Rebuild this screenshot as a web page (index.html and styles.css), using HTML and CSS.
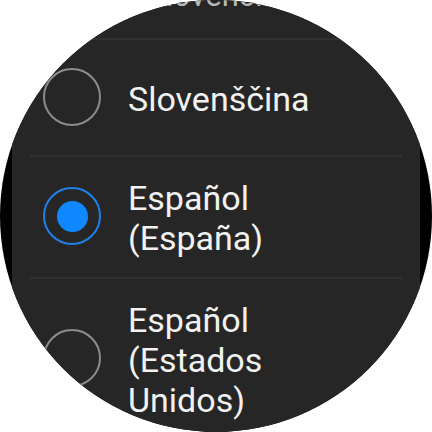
FILE: index.html
```html
<!DOCTYPE html>
<html lang="sk">
<head>
<meta charset="utf-8">
<link rel="stylesheet" href="styles.css">
</head>
<body>
<div class="watch">
  <div class="list">
    <div class="row-top"><span class="label-top">Slovenčina</span></div>
    <div class="row">
      <span class="radio"></span>
      <span class="label">Slovenščina</span>
    </div>
    <div class="row">
      <span class="radio radio-on"><span class="dot"></span></span>
      <span class="label">Español<br>(España)</span>
    </div>
    <div class="row">
      <span class="radio"></span>
      <span class="label">Español<br>(Estados<br>Unidos)</span>
    </div>
  </div>
</div>
</body>
</html>
```

FILE: styles.css
```css
html, body {
  margin: 0;
  padding: 0;
  background: #ffffff;
}

.watch {
  width: 432px;
  height: 432px;
  border-radius: 50%;
  overflow: hidden;
  background: #000000;
  font-family: Roboto, "Noto Sans", sans-serif;
}

.list {
  margin: 0 12px;
  height: 100%;
  background: #262626;
  display: flex;
  flex-direction: column;
}

.row-top {
  height: 38px;
  flex: none;
  padding-left: 135px;
  box-sizing: border-box;
}

.label-top {
  display: block;
  margin-top: -22px;
  font-size: 31px;
  line-height: 36px;
  color: #b8b8b8;
  white-space: nowrap;
}

.row {
  flex: none;
  margin: 0 18px;
  border-top: 2px solid #313131;
  padding: 21px 0 19px;
  min-height: 75px;
  display: flex;
  align-items: center;
}

.radio {
  flex: none;
  width: 58px;
  height: 58px;
  box-sizing: border-box;
  border: 2px solid #8c8c8c;
  border-radius: 50%;
  margin-left: 13px;
  margin-right: 27px;
  margin-bottom: 4px;
  display: flex;
  align-items: center;
  justify-content: center;
}

.radio-on {
  border-color: #1f80e8;
}

.dot {
  width: 31px;
  height: 31px;
  border-radius: 50%;
  background: #1088ff;
}

.label {
  font-size: 34px;
  line-height: 40px;
  color: #f2f2f2;
}
```
